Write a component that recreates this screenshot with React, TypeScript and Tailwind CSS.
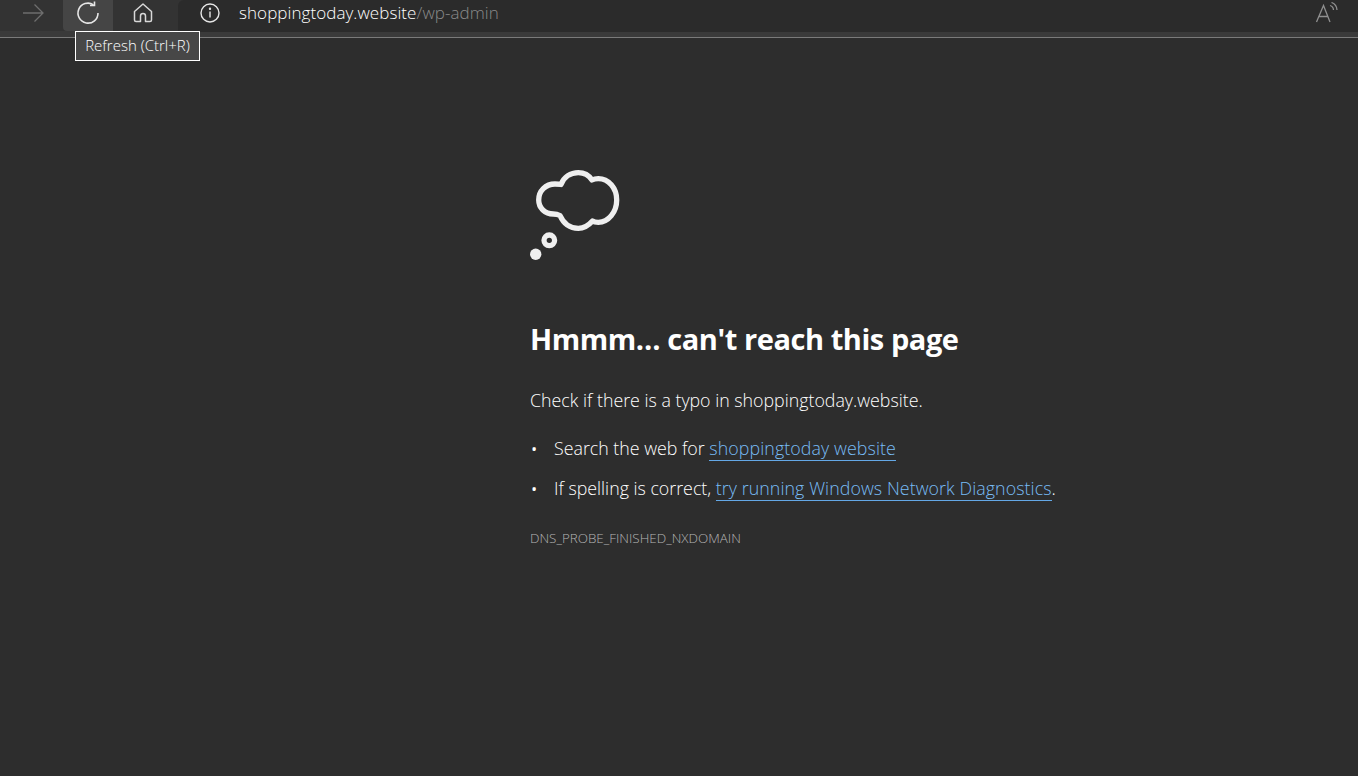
import React from 'react'

const font = { fontFamily: '"Open Sans", "Noto Sans", sans-serif' }

const App: React.FC = () => {
  return (
    <div className="flex h-[776px] w-[1358px] flex-col overflow-hidden bg-[#2d2d2d] text-white" style={font}>
      {/* Toolbar */}
      <div className="relative h-[38px] shrink-0 border-b border-[#7a7a7a] bg-[#3a3a3a]">
        <div className="flex h-[31px] bg-[#333333]">
          <div className="flex h-full w-[63px] items-center justify-end pb-[5px] pr-[18px]">
            <svg width="24" height="20" viewBox="0 0 24 20" fill="none" stroke="#6e6e6e" strokeWidth="1.3">
              <path d="M2 10h20M13.500 1.500 22 10l-8.500 8.500" />
            </svg>
          </div>
          <div className="flex h-full w-[50px] items-center justify-center rounded-bl-sm bg-[#454545] pb-[5px]">
            <svg width="24" height="24" viewBox="0 0 24 24" fill="none" stroke="#e6e6e6" strokeWidth="1.6">
              <path d="M17.500 3.800A10 10 0 1 0 22 12" />
              <path d="M18.500 0.500v4h-4.500" />
            </svg>
          </div>
          <div className="flex h-full w-[65px] items-center justify-start pb-[5px] pl-[19px]">
            <svg width="22" height="22" viewBox="0 0 22 22" fill="none" stroke="#d8d8d8" strokeWidth="1.5" strokeLinejoin="round">
              <path d="M11 2 2.500 9.500V18a1.500 1.500 0 0 0 1.500 1.500h4.500V14a2.500 2.500 0 0 1 5 0v5.500H18a1.500 1.500 0 0 0 1.500-1.500V9.500Z" />
            </svg>
          </div>
          <div className="flex h-[32px] flex-1 items-center rounded-tl-md bg-[#2b2b2b] pb-[6px] pl-[22px]">
            <svg width="20" height="20" viewBox="0 0 20 20" fill="none" stroke="#e6e6e6" strokeWidth="1.4">
              <circle cx="10" cy="10" r="9" />
              <path d="M10 8.500v6" />
              <circle cx="10" cy="5.800" r="0.500" fill="#e6e6e6" />
            </svg>
            <div className="ml-[19px] text-[17px] font-light tracking-[0.07px] text-white">
              shoppingtoday.website<span className="text-[#8a8a8a]">/wp-admin</span>
            </div>
            <div className="ml-auto flex w-[64px] items-start pl-[21px]">
              <svg width="24" height="22" viewBox="0 0 24 22" fill="none" stroke="#8f8f8f" strokeWidth="1.3">
                <path d="M1.500 20 8.500 3.500 15 20M3.800 14.500h9.500" />
                <path d="M15 3.500a5 5 0 0 1 3.500 4.500M16.500 0.500a8.500 8.500 0 0 1 5.500 7.500" />
              </svg>
            </div>
          </div>
        </div>
        <div className="absolute left-[75px] top-[31px] z-10 flex h-[30px] w-[125px] items-center justify-center border border-white bg-[#474747] pb-[2px] text-[15px] font-light text-white">
          Refresh (Ctrl+R)
        </div>
      </div>

      {/* Error page */}
      <main className="flex flex-col pl-[530px] pt-[130px]">
        <svg width="92" height="92" viewBox="0 0 92 92" fill="none">
          <path
            d="M31 16.500C34 9 40.500 4.700 48.300 4.700C54.500 4.700 59 7.500 62 12C64 11 66 10.700 68.300 10.700C78.500 10.700 86.700 20 86.700 32C86.700 44 78.500 54.300 68.300 54.300C66 54.300 64 54 62.500 53C58.500 57.500 54 60.300 48.300 60.300C40 60.300 33.500 55.500 30 47.500C28 46.500 25.500 46 23.300 46C15 46 8.700 40 8.700 32C8.700 23 15.500 16 25 16C27 16 29 16 31 16.500Z"
            stroke="#efefef"
            strokeWidth="5.300"
            strokeLinejoin="round"
          />
          <circle cx="19.300" cy="72.300" r="5.300" stroke="#efefef" strokeWidth="5.300" />
          <circle cx="5.700" cy="86.300" r="5.700" fill="#efefef" />
        </svg>

        <h1 className="mt-[60px] text-[29px] font-bold leading-[38px] tracking-[-0.44px] text-white">Hmmm… can't reach this page</h1>
        <p className="mt-[30px] text-[17.800px] font-light leading-[24px]">Check if there is a typo in shoppingtoday.website.</p>

        <ul className="mt-[24px] flex flex-col gap-[16px] text-[17.800px] font-light leading-[24px]">
          <li className="flex">
            <span className="w-[24px] text-[22px] leading-[24px]">•</span>
            <span>
              Search the web for{' '}
              <a className="border-b border-[#64a8e6] tracking-[0.1px] text-[#78bcf5]">shoppingtoday website</a>
            </span>
          </li>
          <li className="flex">
            <span className="w-[24px] text-[22px] leading-[24px]">•</span>
            <span>
              If spelling is correct,{' '}
              <a className="border-b border-[#64a8e6] tracking-[0.08px] text-[#78bcf5]">try running Windows Network Diagnostics</a>.
            </span>
          </li>
        </ul>

        <div className="mt-[30px] text-[13.400px] font-light leading-[16px] text-[#b4b4b4]">DNS_PROBE_FINISHED_NXDOMAIN</div>
      </main>
    </div>
  )
}

export default App
